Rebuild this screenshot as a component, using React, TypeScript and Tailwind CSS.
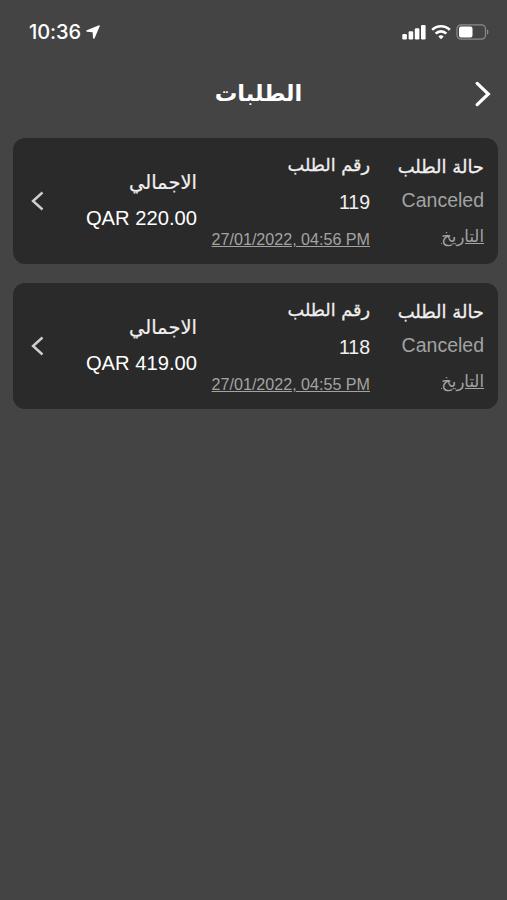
import React from 'react';

const orders = [
  { id: "119", status: "Canceled", date: "27/01/2022, 04:56 PM", total: "QAR 220.00" },
  { id: "118", status: "Canceled", date: "27/01/2022, 04:55 PM", total: "QAR 419.00" },
];

type Order = (typeof orders)[number];

const arabic = "font-['DejaVu_Sans',sans-serif] whitespace-nowrap";

function StatusBar() {
  return (
    <div dir="ltr" className="flex h-16 items-center justify-between pl-[29px] pr-[17px] text-white">
      <div className="flex items-center gap-[5px]">
        <span className="font-['Inter',sans-serif] text-[20px] font-medium leading-6 tracking-[-0.1px]">10:36</span>
        <svg width="14" height="14" viewBox="0 0 14 14" fill="currentColor">
          <path d="M13 .2.8 5.2c-.8.4-.7 1.5.2 1.6l5.6.4.4 5.8c.1.9 1.2 1.1 1.6.2L13.8 1c.2-.5-.3-1-.8-.8Z" />
        </svg>
      </div>
      <div className="flex items-center gap-[5px]">
        <svg width="24" height="16" viewBox="0 0 24 16" fill="currentColor">
          <rect x="0.3" y="10" width="4.6" height="5.4" rx="1.2" />
          <rect x="6.6" y="7.2" width="4.6" height="8.2" rx="1.2" />
          <rect x="12.8" y="4.3" width="4.6" height="11.1" rx="1.2" />
          <rect x="19" y="1" width="4.6" height="14.4" rx="1.2" />
        </svg>
        <svg width="20" height="16" viewBox="0 0 20 16" fill="none" stroke="currentColor" strokeWidth="2.7">
          <path d="M1.2 5.9a12.4 12.4 0 0 1 17.6 0" />
          <path d="M4.7 9.6a7.5 7.5 0 0 1 10.6 0" />
          <path d="M10 15.3 7.3 12.6a3.8 3.8 0 0 1 5.4 0Z" fill="currentColor" stroke="none" />
        </svg>
        <svg width="34" height="16" viewBox="0 0 34 16">
          <rect x="1" y="0.8" width="28.5" height="14.4" rx="4" fill="none" stroke="#8b8b8b" strokeWidth="1.2" />
          <rect x="3" y="2.6" width="13.5" height="10.8" rx="2" fill="#fff" />
          <path d="M31 5.5c1.9.6 1.9 4.4 0 5Z" fill="#8b8b8b" />
        </svg>
      </div>
    </div>
  );
}

function Header() {
  return (
    <header className="relative flex h-[74px] justify-center pl-[10px] pt-[12px] text-white">
      <h1 className={`${arabic} text-[22.5px] font-bold leading-[34px]`}>الطلبات</h1>
      <button className="absolute right-[16px] top-[17px]">
        <svg width="16" height="26" viewBox="0 0 16 26" fill="none" stroke="currentColor" strokeWidth="3.2" strokeLinecap="round">
          <path d="M2.2 2.4 13.3 13 2.2 23.6" />
        </svg>
      </button>
    </header>
  );
}

function OrderCard({ order }: { order: Order }) {
  return (
    <article className="flex h-[126px] rounded-[12px] bg-[#2a2a2a] pr-[14px] font-['Liberation_Sans',sans-serif] text-[#f0f0f0]">
      {/* Status */}
      <div className="w-[114px] pt-[15px]">
        <div className={`${arabic} text-[18px] leading-7 [-webkit-text-stroke:0.3px]`}>حالة الطلب</div>
        <div className="mt-[5px] text-[19.5px] leading-7 text-[#a3a3a3]">{order.status}</div>
        <div className={`${arabic} mt-[9px] text-[16.5px] leading-7 text-[#a3a3a3] underline`}>التاريخ</div>
      </div>
      {/* Number and date */}
      <div className="w-[173px] pt-[13px]">
        <div className={`${arabic} text-[17.7px] leading-7 [-webkit-text-stroke:0.3px]`}>رقم الطلب</div>
        <div className="mt-[9px] text-[19.5px] leading-7">{order.id}</div>
        <div dir="ltr" className="mt-[9px] whitespace-nowrap text-right text-[16.1px] leading-7 text-[#a3a3a3] underline">{order.date}</div>
      </div>
      {/* Total */}
      <div className="w-[153px] pt-[31px]">
        <div className={`${arabic} text-[19.5px] leading-7 [-webkit-text-stroke:0.2px]`}>الاجمالي</div>
        <div dir="ltr" className="mt-[7px] text-right text-[20.2px] leading-7 text-white">{order.total}</div>
      </div>
      <svg className="mt-[53px]" width="13" height="20" viewBox="0 0 13 20" fill="none" stroke="#d0d0d0" strokeWidth="2.4">
        <path d="M11.5 1.5 2 10l9.5 8.5" />
      </svg>
    </article>
  );
}

export default function App() {
  return (
    <div dir="rtl" className="min-h-screen bg-[#444444]">
      <StatusBar />
      <Header />
      <main className="flex flex-col gap-[19px] pl-[13px] pr-[9px]">
        {orders.map((order) => (
          <OrderCard key={order.id} order={order} />
        ))}
      </main>
    </div>
  );
}
